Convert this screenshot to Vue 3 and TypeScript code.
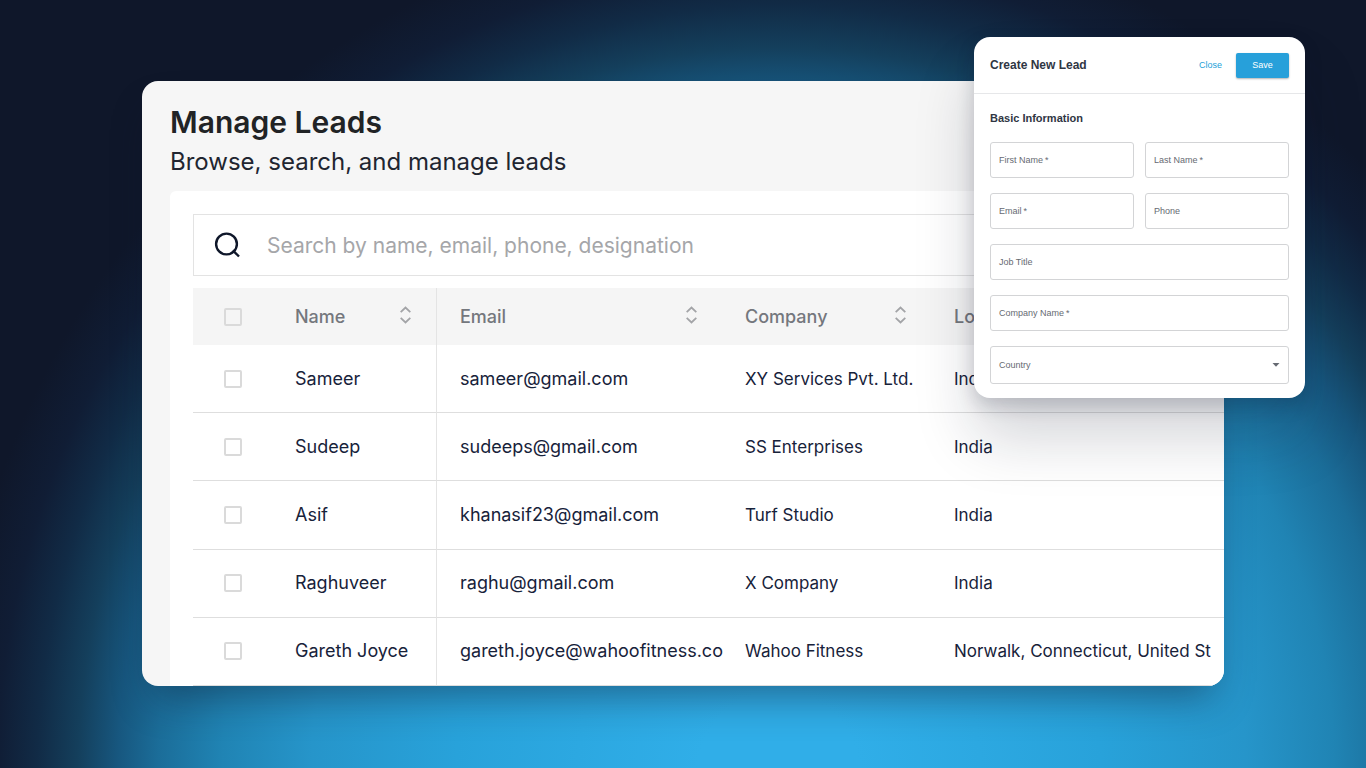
<script setup lang="ts">
import { ref } from 'vue'

interface Lead {
  name: string
  email: string
  company: string
  location: string
}

interface Field {
  id: string
  label: string
  required: boolean
  wide: boolean
}

const columns = ['Name', 'Email', 'Company', 'Location']

const leads: Lead[] = [
  { name: 'Sameer', email: 'sameer@gmail.com', company: 'XY Services Pvt. Ltd.', location: 'India' },
  { name: 'Sudeep', email: 'sudeeps@gmail.com', company: 'SS Enterprises', location: 'India' },
  { name: 'Asif', email: 'khanasif23@gmail.com', company: 'Turf Studio', location: 'India' },
  { name: 'Raghuveer', email: 'raghu@gmail.com', company: 'X Company', location: 'India' },
  { name: 'Gareth Joyce', email: 'gareth.joyce@wahoofitness.co', company: 'Wahoo Fitness', location: 'Norwalk, Connecticut, United St' },
]

const fields: Field[] = [
  { id: 'first-name', label: 'First Name', required: true, wide: false },
  { id: 'last-name', label: 'Last Name', required: true, wide: false },
  { id: 'email', label: 'Email', required: true, wide: false },
  { id: 'phone', label: 'Phone', required: false, wide: false },
  { id: 'job-title', label: 'Job Title', required: false, wide: true },
  { id: 'company-name', label: 'Company Name', required: true, wide: true },
]

const values = ref<Record<string, string>>({})
const country = ref('')
const query = ref('')
</script>

<template>
  <div class="stage">
    <main class="page">
      <h1>Manage Leads</h1>
      <p class="subtitle">Browse, search, and manage leads</p>
      <section class="panel">
        <div class="search">
          <svg viewBox="0 0 28 28" aria-hidden="true">
            <circle cx="12.5" cy="13" r="10.4" />
            <path d="M18.8 19.3L25 25.5" />
          </svg>
          <input v-model="query" type="search" aria-label="Search leads" placeholder="Search by name, email, phone, designation" />
        </div>
        <table>
          <colgroup>
            <col class="c-check" />
            <col class="c-name" />
            <col class="c-email" />
            <col class="c-company" />
            <col />
          </colgroup>
          <thead>
            <tr>
              <th class="check"><input type="checkbox" aria-label="Select all leads" /></th>
              <th v-for="column in columns" :key="column" scope="col">
                <div class="head">
                  <span>{{ column }}</span>
                  <button type="button" :aria-label="`Sort by ${column}`">
                    <svg viewBox="0 0 12 18" aria-hidden="true">
                      <path d="M1.2 6.2L6 1.6L10.8 6.2M1.2 11.8L6 16.4L10.8 11.8" />
                    </svg>
                  </button>
                </div>
              </th>
            </tr>
          </thead>
          <tbody>
            <tr v-for="lead in leads" :key="lead.email">
              <td class="check"><input type="checkbox" :aria-label="`Select ${lead.name}`" /></td>
              <td>{{ lead.name }}</td>
              <td>{{ lead.email }}</td>
              <td class="compact">{{ lead.company }}</td>
              <td class="compact"><div class="clip">{{ lead.location }}</div></td>
            </tr>
          </tbody>
        </table>
      </section>
    </main>

    <form class="dialog" @submit.prevent>
      <header>
        <h2>Create New Lead</h2>
        <button class="close" type="button">Close</button>
        <button class="save" type="submit">Save</button>
      </header>
      <div class="body">
        <h3>Basic Information</h3>
        <div class="grid">
          <div v-for="field in fields" :key="field.id" class="field" :class="{ wide: field.wide }">
            <label :for="field.id">{{ field.label }}<span v-if="field.required" class="star">*</span></label>
            <input :id="field.id" v-model="values[field.id]" type="text" />
          </div>
          <div class="field wide country">
            <label for="country">Country</label>
            <select id="country" v-model="country">
              <option value=""></option>
            </select>
            <svg viewBox="0 0 8 4" aria-hidden="true"><path d="M0.5 0H7.5L4 3.8Z" /></svg>
          </div>
        </div>
      </div>
    </form>
  </div>
</template>

<style>
body {
  margin: 0;
  background: #0f172a;
}
</style>

<style scoped>
* {
  box-sizing: border-box;
}

.stage {
  position: relative;
  display: flex;
  min-height: 100vh;
  padding: 81px 142px 82px;
  overflow: hidden;
  font-family: Inter, "Noto Sans", sans-serif;
  background: radial-gradient(ellipse 59% 109% at 57% 101%,
    #30aee8 0%,
    #30aee8 10%,
    #28a2da 40%,
    #2695ca 58%,
    #2084b4 69%,
    #1b6d99 77%,
    #17577f 82%,
    #143f5c 87%,
    #112b46 92%,
    #101d35 97%,
    #0f172a 103%);
}

.page {
  display: flex;
  flex: 1;
  flex-direction: column;
  min-width: 0;
  padding: 23px 0 0 28px;
  overflow: hidden;
  border-radius: 16px;
  background: #f6f6f6;
  box-shadow: 0 22px 40px -12px rgba(15, 23, 42, 0.45);
}

h1 {
  margin: 0;
  font-size: 30px;
  font-weight: 600;
  line-height: 36px;
  color: #212325;
}

.subtitle {
  margin: 4px 0 11px;
  font-size: 24px;
  line-height: 36px;
  color: #212530;
}

.panel {
  flex: 1;
  padding: 23px 0 0 23px;
  border-top-left-radius: 6px;
  background: #fff;
}

.search {
  display: flex;
  align-items: center;
  gap: 25px;
  height: 62px;
  margin-bottom: 12px;
  padding-left: 20px;
  border: 1px solid #e3e3e3;
  border-right: 0;
}

.search svg {
  flex: none;
  width: 28px;
  height: 28px;
  fill: none;
  stroke: #0f172a;
  stroke-width: 2.4;
}

.search input {
  flex: 1;
  min-width: 0;
  height: 100%;
  padding: 0;
  border: 0;
  outline: 0;
  font: 21px/30px Inter, "Noto Sans", sans-serif;
  color: #1a2438;
  background: transparent;
}

.search input::placeholder {
  color: #a5a6a9;
}

table {
  width: 100%;
  height: 398px;
  table-layout: fixed;
  border-collapse: separate;
  border-spacing: 0;
}

.c-check { width: 79px; }
.c-name { width: 165px; }
.c-email { width: 285px; }
.c-company { width: 209px; }

thead tr {
  height: 57px;
}

tbody tr {
  height: 68px;
}

th,
td {
  padding: 0 0 0 23px;
  text-align: left;
  white-space: nowrap;
}

th {
  font-size: 18px;
  font-weight: 500;
  color: #74777d;
  background: #f5f5f5;
}

td {
  border-bottom: 1px solid #dedede;
  font-size: 18px;
  line-height: 26px;
  color: #17223a;
}

.compact {
  font-size: 17px;
}

th:nth-child(2),
td:nth-child(2) {
  border-right: 1px solid #e4e4e4;
}

.check {
  padding: 0 0 0 31px;
}

.check input {
  display: block;
  width: 18px;
  height: 18px;
  margin: 0;
  appearance: none;
  border: 2px solid #dadada;
  border-radius: 2px;
}

.head {
  display: flex;
  align-items: center;
  justify-content: space-between;
  padding-right: 24px;
}

.head button {
  padding: 0;
  border: 0;
  margin-bottom: 4px;
  background: none;
}

.head svg {
  display: block;
  width: 13px;
  height: 18px;
  fill: none;
  stroke: #a3a4a7;
  stroke-width: 1.8;
}

.clip {
  margin-right: 7px;
  overflow: hidden;
}

.dialog {
  position: absolute;
  top: 37px;
  right: 61px;
  width: 331px;
  border-radius: 16px;
  font-family: "Liberation Sans", sans-serif;
  background: #fff;
  box-shadow: 0 8px 18px rgba(15, 23, 42, 0.18), 0 40px 60px rgba(15, 23, 42, 0.18);
}

.dialog header {
  display: flex;
  align-items: center;
  height: 57px;
  padding: 0 16px;
  border-bottom: 1px solid #e6e7e9;
}

h2 {
  flex: 1;
  margin: 0;
  font-size: 12px;
  line-height: 16px;
  color: #2f3643;
}

.close,
.save {
  padding: 0;
  border: 0;
  font: 9px/12px "Liberation Sans", sans-serif;
}

.close {
  margin-right: 14px;
  color: #259fd8;
  background: none;
}

.save {
  width: 53px;
  height: 25px;
  border-radius: 2px;
  color: #fff;
  background: #27a0da;
  box-shadow: 0 1px 2px rgba(0, 0, 0, 0.3);
}

.body {
  padding: 16px 16px 14px;
}

h3 {
  margin: 0 0 16px;
  font-size: 11px;
  line-height: 16px;
  color: #2f3643;
}

.grid {
  display: grid;
  grid-template-columns: 1fr 1fr;
  gap: 15px 11px;
}

.field {
  display: grid;
  align-items: center;
  height: 36px;
  border: 1px solid #d3d4d6;
  border-radius: 3px;
}

.field > * {
  grid-area: 1 / 1;
}

.wide {
  grid-column: 1 / -1;
}

.country {
  height: 38px;
}

.field label {
  padding-left: 8px;
  font-size: 9px;
  line-height: 12px;
  color: #666a72;
}

.star {
  margin-left: 2px;
}

.field input,
.field select {
  width: 100%;
  height: 100%;
  padding: 0 8px;
  border: 0;
  outline: 0;
  appearance: none;
  font: 9px/12px "Liberation Sans", sans-serif;
  background: transparent;
}

.field svg {
  justify-self: end;
  width: 8px;
  height: 4px;
  margin-right: 8px;
  fill: #666a72;
  pointer-events: none;
}
</style>
